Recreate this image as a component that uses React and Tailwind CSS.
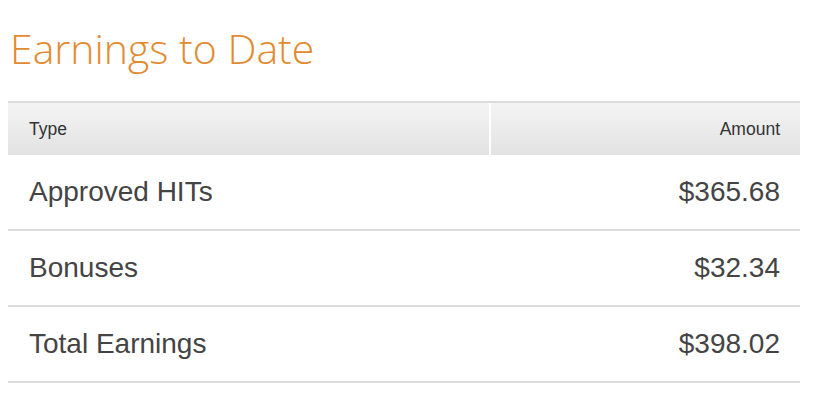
export default function App() {
  const rows = [
    ["Approved HITs", "$365.68"],
    ["Bonuses", "$32.34"],
    ["Total Earnings", "$398.02"],
  ];
  return (
    <div className="w-[816px] h-[401px] bg-white overflow-hidden">
      <div className="pl-2 pr-4">
        <h1
          className="pt-[22px] pl-[2px] h-[101px] text-[41px] leading-[52px] font-light text-[#e38a30]"
          style={{ fontFamily: '"Open Sans", "Noto Sans", sans-serif' }}
        >
          Earnings to Date
        </h1>
        <div
          className="text-[#444]"
          style={{ fontFamily: '"Liberation Sans", Arial, sans-serif' }}
        >
          <div className="flex border-t-2 border-[#dcdcdc] h-[54px] bg-gradient-to-b from-[#f4f4f4] to-[#e2e2e2] text-[17.5px] text-[#333]">
            <div className="w-[483px] flex items-center pl-[21px] border-r-2 border-white">Type</div>
            <div className="flex-1 flex items-center justify-end pr-[20px]">Amount</div>
          </div>
          {rows.map(([label, value]) => (
            <div
              key={label}
              className="flex items-center justify-between h-[76px] border-b-2 border-[#dcdcdc] pl-[21px] pr-[20px] text-[28px]"
            >
              <span>{label}</span>
              <span>{value}</span>
            </div>
          ))}
        </div>
      </div>
    </div>
  );
}
